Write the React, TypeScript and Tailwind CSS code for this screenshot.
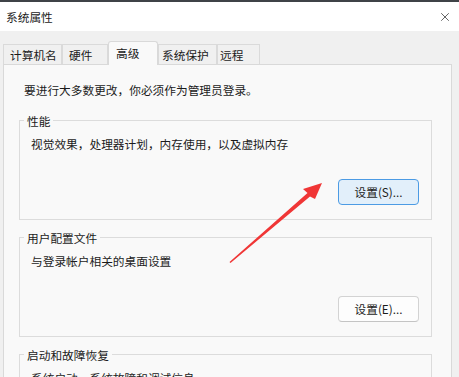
import { X } from "lucide-react"

const font = { fontFamily: '"Noto Sans CJK SC", "Noto Sans", sans-serif' }

function Tab({ label, w, pl, active }: { label: string, w: string, pl: string, active?: boolean }) {
    if (active) {
        return <div className={`${w} ${pl} h-[24px] -mb-[1px] relative z-10 bg-[#f9f9f9] border border-b-0 border-[#d9d9d9] rounded-t-[3px] leading-[21px] text-[11.7px]`}>
            {label}
        </div>
    }
    return <div className={`${w} ${pl} h-[20px] bg-[#f0f0f0] border border-b-0 border-[#dadada] leading-[19px] text-[11.7px]`}>
        {label}
    </div>
}

function Group({ title, desc, button, focused }: { title: string, desc: string, button?: string, focused?: boolean }) {
    return <div className="ml-[15px] mr-[19px] border border-[#dcdcdc] pb-[14px]">
        <div className="-mt-[7px] ml-[4px] w-fit px-[3px] bg-[#f9f9f9] leading-[14px] text-[11.7px]">{title}</div>
        <div className="mt-[8px] pl-[11px] leading-[16px] text-[11.7px]">{desc}</div>
        {button && <div className="flex justify-end pr-[12px] mt-[27px]">
            <button className={focused
                ? "w-[81px] h-[26px] rounded-[4px] border border-[#4c9be4] bg-[#e2effa] text-[11.7px] leading-[24px]"
                : "w-[81px] h-[26px] rounded-[4px] border border-[#d3d3d3] border-b-[#c4c4c4] bg-[#fdfdfd] text-[11.7px] leading-[24px]"}>
                {button}
            </button>
        </div>}
    </div>
}

export default function App() {
    return <div className="relative w-[459px] h-[377px] overflow-hidden bg-[#f0f0f0] text-[#1b1b1b] flex flex-col" style={font}>
        <div className="shrink-0 h-[31px] bg-white border-t-2 border-[#3f4347] flex items-center justify-between pl-[6px] pr-[7px]">
            <span className="text-[11.7px] leading-[14px]">系统属性</span>
            <X size={14} strokeWidth={1.2} className="text-[#222]" />
        </div>
        <div className="shrink-0 pl-[3px] pr-[7px] pt-[9px]">
            <div className="flex items-end h-[24px]">
                <Tab label="计算机名" w="w-[59px]" pl="pl-[6px]" />
                <Tab label="硬件" w="w-[46px]" pl="pl-[6px]" />
                <Tab label="高级" w="w-[50px]" pl="pl-[7px]" active />
                <Tab label="系统保护" w="w-[59px]" pl="pl-[3px]" />
                <Tab label="远程" w="w-[43px]" pl="pl-[2px]" />
            </div>
            <div className="bg-[#f9f9f9] border border-[#d9d9d9] h-[400px] pt-[17px]">
                <div className="pl-[20px] leading-[16px] text-[11.7px]">要进行大多数更改，你必须作为管理员登录。</div>
                <div className="mt-[22px]">
                    <Group title="性能" desc="视觉效果，处理器计划，内存使用，以及虚拟内存" button="设置(S)..." focused />
                </div>
                <div className="mt-[17px]">
                    <Group title="用户配置文件" desc="与登录帐户相关的桌面设置" button="设置(E)..." />
                </div>
                <div className="mt-[17px]">
                    <Group title="启动和故障恢复" desc="系统启动、系统故障和调试信息" />
                </div>
            </div>
        </div>
        <svg className="absolute inset-0 pointer-events-none" width="459" height="377" viewBox="0 0 459 377">
            <polygon points="322,183 303,189 307.5,193 229.5,262 230.5,263 310,196.5 315,199" fill="#f03636" />
        </svg>
    </div>
}
